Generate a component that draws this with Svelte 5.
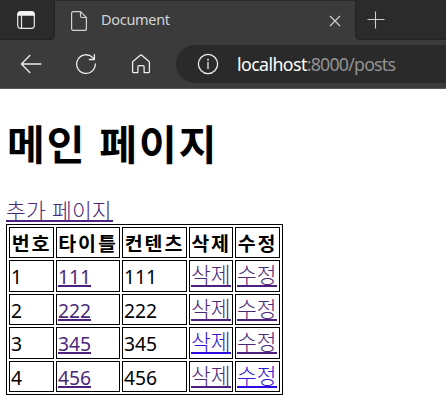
<script>
  const posts = [
    { id: 1, title: '111', content: '111' },
    { id: 2, title: '222', content: '222' },
    { id: 3, title: '345', content: '345', freshDelete: true },
    { id: 4, title: '456', content: '456', freshEdit: true }
  ];
</script>

<div class="window">
  <header>
    <div class="tabs">
      <div class="side left">
        <svg class="panel" width="20" height="20" viewBox="0 0 20 20" fill="none">
          <rect x="1.7" y="1.7" width="16.6" height="16.6" rx="2.8" stroke="#e8e8e8" stroke-width="1.2" />
          <path d="M1.5 5.8V4.2Q1.5 1.5 4.2 1.5H15.8Q18.5 1.5 18.5 4.2V5.8Z" fill="#f4f4f4" />
          <path d="M5.5 5.5V18" stroke="#e8e8e8" stroke-width="1.2" />
        </svg>
      </div>
      <div class="tab">
        <svg class="doc" width="18" height="22" viewBox="0 0 18 22" fill="none" stroke="#d2d2d2" stroke-width="1.2" stroke-linejoin="round">
          <path d="M3.6 1.6H10.5L16.4 7.5V18.4Q16.4 20.4 14.4 20.4H3.6Q1.6 20.4 1.6 18.4V3.6Q1.6 1.6 3.6 1.6Z" />
          <path d="M10.5 1.6V6Q10.5 7.5 12 7.5H16.4" />
        </svg>
        <span class="title">Document</span>
        <svg class="close" width="12" height="12" viewBox="0 0 12 12" stroke="#d0d0d0" stroke-width="1.2"><path d="M1 1L11 11M11 1L1 11" /></svg>
      </div>
      <div class="side right">
        <svg class="plus" width="18" height="18" viewBox="0 0 18 18" stroke="#cfcfcf" stroke-width="1.1"><path d="M.5 8.5H17.5M8.5 .5V17.5" /></svg>
      </div>
    </div>
    <div class="bar">
      <svg class="back" width="22" height="20" viewBox="0 0 22 20" fill="none" stroke="#ededed" stroke-width="1.3" stroke-linecap="round" stroke-linejoin="round"><path d="M9.8 1.5L1.4 10L9.8 18.5M1.4 10H20.8" /></svg>
      <svg class="reload" width="22" height="22" viewBox="0 0 22 22" fill="none" stroke="#ededed" stroke-width="1.3" stroke-linecap="round" stroke-linejoin="round"><path d="M20.3 11A9.3 9.3 0 1 1 17.5 4.4L19.3 6.4M19.4 1.6V6.5H14.3" /></svg>
      <svg class="home" width="20" height="20" viewBox="0 0 20 20" fill="none" stroke="#ededed" stroke-width="1.3" stroke-linejoin="round"><path d="M1.6 8.5Q1.6 7.8 2.2 7.3L9 1.4Q10 .6 11 1.4L17.8 7.3Q18.4 7.8 18.4 8.5V17.4Q18.4 18.6 17.2 18.6H13.1V12.7Q13.1 11.7 12.1 11.7H7.9Q6.9 11.7 6.9 12.7V18.6H2.8Q1.6 18.6 1.6 17.4Z" /></svg>
      <div class="address">
        <svg class="info" width="22" height="22" viewBox="0 0 22 22" fill="none" stroke="#ededed" stroke-width="1.3"><circle cx="11" cy="11" r="9.6" /><path d="M11 9.5V15.6" stroke-linecap="round" /><circle cx="11" cy="6.7" r=".9" fill="#ededed" stroke="none" /></svg>
        <span class="url"><b>localhost</b>:8000/posts</span>
      </div>
    </div>
  </header>

  <main>
    <h1>메인 페이지</h1>
    <a class="add" href="#add">추가 페이지</a>
    <table>
      <colgroup><col class="c1" /><col class="c2" /><col class="c3" /><col class="c4" /><col class="c5" /></colgroup>
      <thead>
        <tr><th>번호</th><th>타이틀</th><th>컨텐츠</th><th>삭제</th><th>수정</th></tr>
      </thead>
      <tbody>
        {#each posts as post}
          <tr>
            <td><span>{post.id}</span></td>
            <td><a href="#post">{post.title}</a></td>
            <td><span>{post.content}</span></td>
            <td><a class="ko" class:fresh={post.freshDelete} href="#delete">삭제</a></td>
            <td><a class="ko" class:fresh={post.freshEdit} href="#edit">수정</a></td>
          </tr>
        {/each}
      </tbody>
    </table>
  </main>
</div>

<style>
  :global(body) { margin: 0; background: #fff; overflow: hidden; }
  .window { width: 446px; height: 408px; overflow: hidden; background: #fff; font-family: "Noto Sans", "Noto Sans CJK KR", sans-serif; }
  svg { display: block; flex: none; }
  header { height: 89px; box-sizing: border-box; background: #3b3b3b; border-bottom: 1px solid #575757; }
  .tabs { display: flex; height: 40px; background: #3b3b3b; }
  .side { background: #2b2b2b; box-sizing: border-box; }
  .left { width: 55px; border-radius: 0 0 5px 0; padding: 10px 0 0 16px; box-shadow: inset -1px -1px 1px #242424; }
  .right { flex: 1; border-radius: 0 0 0 5px; padding: 11px 0 0 12px; box-shadow: inset 1px -1px 1px #242424; }
  .tab { width: 300px; display: flex; align-items: flex-start; box-sizing: border-box; padding: 9px 14px 0 15px; border-top: 1px solid #2b2b2b; }
  .title { margin: 0 auto 0 13px; font: 14.5px/19px "Noto Sans", sans-serif; color: #d4d4d4; letter-spacing: -.3px; }
  .close { margin-top: 5px; }
  .bar { display: flex; align-items: center; height: 48px; padding-left: 20px; }
  .reload { margin-left: 33px; }
  .home { margin-left: 34px; }
  .address { display: flex; align-items: center; flex: 1; height: 38px; margin-left: 25px; padding-left: 21px; border-radius: 19px 0 0 19px; background: #2a2a2a; }
  .url { margin-left: 18px; font: 17.8px/24px "Noto Sans", sans-serif; letter-spacing: -.8px; color: #929292; white-space: nowrap; }
  .url b { font-weight: 400; color: #fff; letter-spacing: -.6px; }
  main { padding: 27px 6px 0; }
  h1 { margin: 0 0 0 1px; height: 81px; font: 700 41px/53px "Noto Sans CJK KR", sans-serif; letter-spacing: 2px; word-spacing: 1.5px; color: #000; white-space: nowrap; }
  a { display: block; width: max-content; box-sizing: border-box; color: #4b2878; text-decoration: none; border-bottom: 2px solid #4b207e; white-space: nowrap; }
  .add, .ko { font-family: "Noto Sans CJK KR", sans-serif; font-weight: 300; }
  .add { height: 25px; width: 107px; font-size: 21.5px; line-height: 25px; letter-spacing: .2px; word-spacing: 1px; }
  table { width: 277px; margin-top: 2px; box-sizing: border-box; table-layout: fixed; border: 1px solid #000; border-collapse: separate; border-spacing: 2px; color: #000; }
  .c1, .c5 { width: 45px; }
  .c2 { width: 64px; }
  .c3 { width: 65px; }
  .c4 { width: 44px; }
  th, td { height: 31px; box-sizing: border-box; border: 1px solid #000; padding: 0 1px; vertical-align: top; }
  tr:nth-child(odd) td { height: 32px; }
  tbody tr:nth-child(even) td { height: 31px; }
  th { font: 700 19.5px/29px "Noto Sans CJK KR", sans-serif; letter-spacing: 1.9px; white-space: nowrap; }
  td { font-size: 19.3px; line-height: 31px; text-align: left; }
  td a, td span { display: block; height: 26px; }
  td a:not(.ko) { height: 26px; }
  td .ko { width: 40px; font-size: 21.5px; line-height: 26px; }
  a.fresh { color: #3317cf; border-color: #2b0be0; }
</style>
